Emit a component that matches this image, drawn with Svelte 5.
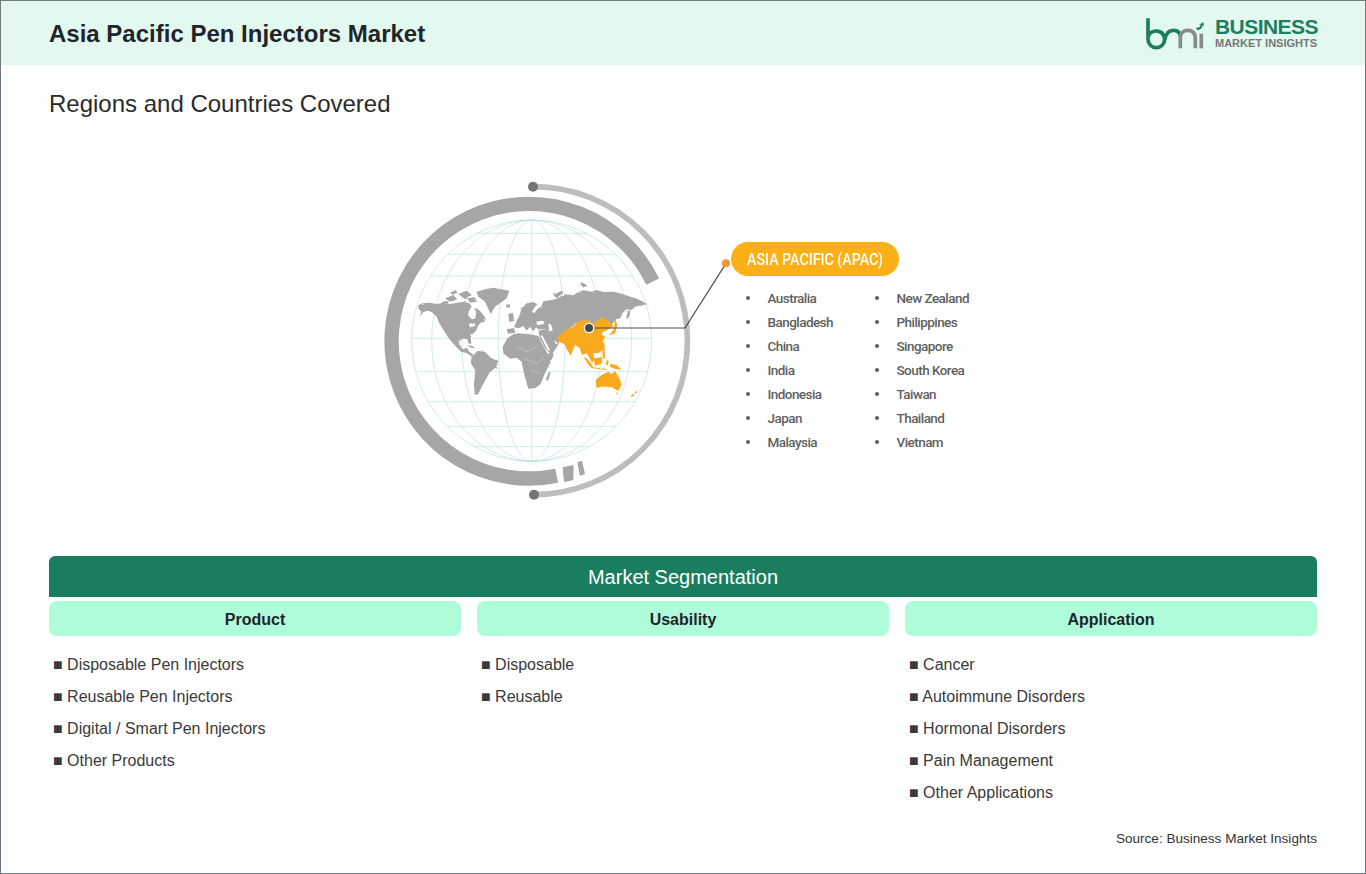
<script>
  const cx = 485, cy = 512, rx = 360, ry = 362;
  const lats = [190, 253, 318, 505, 605, 695, 770, 830].map((y) => {
    const half = rx * Math.sqrt(1 - ((y - cy) / ry) ** 2);
    return { y, x1: cx - half, x2: cx + half };
  });
  const meridians = [360, 300, 210, 100];

  const grayLand = [
    "145,405 158,400 180,398 200,402 222,398 240,402 262,398 280,395 298,400 305,410 300,418 295,425 296,438 305,448 315,446 318,432 316,415 325,418 338,432 348,447 342,456 332,458 325,466 318,482 308,492 302,502 304,520 297,523 291,507 276,506 266,512 269,526 278,538 291,533 298,546 312,556 306,560 290,549 274,546 254,526 236,505 222,482 208,460 200,440 188,428 175,422 160,426 150,440 154,425 145,415",
    "320,365 345,358 370,353 418,362 410,385 392,398 375,410 362,432 352,410 345,395 325,380",
    "305,562 322,543 345,545 362,563 385,572 378,592 358,608 348,628 335,650 325,672 314,675 312,640 316,602 302,578",
    "398,530 412,505 430,493 445,490 475,492 505,498 518,525 532,550 552,553 535,590 524,612 512,642 497,654 475,656 463,615 455,575 440,563 420,566 400,550",
    "537,605 542,607 534,632 527,630",
    "410,478 432,474 436,488 414,491",
    "415,432 428,428 434,452 418,456",
    "408,405 420,403 420,412 410,413",
    "432,472 440,452 448,438 452,425 455,415 470,400 490,396 502,403 494,412 486,425 492,430 502,418 515,408 520,394 545,390 560,386 585,373 610,376 625,366 640,361 665,365 680,360 700,366 730,365 750,370 775,378 800,386 815,393 832,403 815,406 795,410 785,420 770,418 758,428 750,445 738,448 725,465 695,445 675,460 630,455 590,480 562,505 552,498 540,485 525,478 505,478 498,472 490,484 480,470 470,482 460,468 448,474",
    "505,482 525,478 545,486 562,505 568,520 545,555 525,535 510,505",
    "772,428 782,418 778,440 768,448",
    "630,342 640,338 652,348 640,352",
    "550,375 575,362 580,368 560,385",
    "290,525 305,527 316,535 303,533",
    "225,385 250,375 262,388 240,395",
    "265,372 290,362 305,375 285,388",
    "292,385 315,382 318,395 300,398",
    "240,368 258,360 262,368 248,374",
    "215,396 232,392 236,400 220,402",
  ];
  const whiteHoles = [
    "498,455 520,452 522,462 502,466",
    "535,462 543,462 548,482 538,484",
    "512,498 517,496 540,540 534,542",
    "552,510 562,518 566,524 556,520",
    "296,462 312,458 316,468 300,472",
  ];
  const orangeLand = [
    "560,505 575,490 590,478 610,470 630,452 650,450 675,460 685,450 700,443 720,455 730,470 715,478 705,485 695,488 700,500 708,495 698,515 702,535 685,550 670,550 673,570 665,580 658,562 650,550 635,555 630,535 615,525 605,550 602,558 592,540 583,522 565,515",
    "735,445 742,465 735,490 715,497 722,490 732,478",
    "640,560 650,565 670,590 660,590",
    "670,565 698,562 695,582 675,587",
    "660,590 710,597 710,600 664,594",
    "696,518 703,518 705,565 698,562",
    "710,570 716,572 714,586 708,584",
    "720,582 740,585 755,600 735,597 720,590",
    "677,630 695,615 715,605 725,612 735,603 748,625 755,645 745,662 720,650 695,650 680,655",
    "738,668 744,668 742,676",
    "782,678 790,672 802,660 800,668 786,682",
  ];

  const left = ["Australia", "Bangladesh", "China", "India", "Indonesia", "Japan", "Malaysia"];
  const right = ["New Zealand", "Philippines", "Singapore", "South Korea", "Taiwan", "Thailand", "Vietnam"];

  const columns = [
    { title: "Product", items: ["Disposable Pen Injectors", "Reusable Pen Injectors", "Digital / Smart Pen Injectors", "Other Products"] },
    { title: "Usability", items: ["Disposable", "Reusable"] },
    { title: "Application", items: ["Cancer", "Autoimmune Disorders", "Hormonal Disorders", "Pain Management", "Other Applications"] },
  ];
</script>

<div class="page">
  <header class="top">
    <h1>Asia Pacific Pen Injectors Market</h1>
    <div class="logo">
      <svg class="mark" viewBox="40 45 190 105" aria-hidden="true">
        <g fill="none" stroke-width="11">
          <path d="M55 52 V115 A25 25 0 1 0 80 90 C70 90 60 96 56 106" stroke="#1a7f5f" />
          <path d="M80 90 C98 90 104 102 106 116 C108 98 118 88 132 88 C144 88 150 94 152 104" stroke="#1a7f5f" />
          <path d="M152 104 V142" stroke="#8a8a8a" />
          <path d="M152 110 C152 96 162 88 174 88 C188 88 196 96 197 110 V142" stroke="#8a8a8a" />
          <path d="M215 98 V142" stroke="#8a8a8a" />
        </g>
        <path d="M200 80 C209 80 213 76 213 71 L208 72 L221 63 L223 77 L219 73 C218 82 211 88 202 87 Z" fill="#1a7f5f" />
      </svg>
      <div class="wordmark">
        <span class="w1">BUSINESS</span>
        <span class="w2">MARKET INSIGHTS</span>
      </div>
    </div>
  </header>

  <h2>Regions and Countries Covered</h2>

  <section class="map">
    <svg class="globe" viewBox="0 0 1095 1020" aria-hidden="true">
      <defs>
        <filter id="rough" x="0" y="0" width="1095" height="1020" filterUnits="userSpaceOnUse">
          <feTurbulence type="fractalNoise" baseFrequency="0.09" numOctaves="2" seed="3" result="n" />
          <feDisplacementMap in="SourceGraphic" in2="n" scale="6" />
        </filter>
      </defs>
      <g fill="none" stroke="#a9dcd6" stroke-width="1.6">
        {#each lats as l}
          <line x1={l.x1} y1={l.y} x2={l.x2} y2={l.y} />
        {/each}
        <line x1={cx} y1={cy - ry} x2={cx} y2={cy + ry} />
        {#each meridians as m}
          <ellipse {cx} {cy} rx={m} {ry} />
        {/each}
      </g>
      <g filter="url(#rough)">
        <g fill="#a6a6a6">
          {#each grayLand as p}
            <polygon points={p} />
          {/each}
        </g>
        <g fill="#fff">
          {#each whiteHoles as p}
            <polygon points={p} />
          {/each}
        </g>
        <g fill="#f9aa1f">
          {#each orangeLand as p}
            <polygon points={p} />
          {/each}
        </g>
      </g>
      <path d="M440 530 L470 545 L500 530 M460 565 L500 580 L520 565 M480 600 L510 610" fill="none" stroke="#d9d9d9" stroke-width="1.5" />

      <path d="M848 335 A412 412 0 1 0 560 917" fill="none" stroke="#a6a6a6" stroke-width="43" />
      <polygon points="578,892 611,885 610,930 582,937" fill="#a6a6a6" />
      <polygon points="622,877 636,872 645,912 630,918" fill="#a6a6a6" />

      <path d="M489 50 A462 462 0 0 1 492 974" fill="none" stroke="#bdbdbd" stroke-width="17" />
      <circle cx="489" cy="50" r="15" fill="#757575" />
      <circle cx="492" cy="974" r="15" fill="#757575" />

      <path d="M657 474 H945 L1068 280" fill="none" stroke="#4a4a4a" stroke-width="3.5" />
      <circle cx="657" cy="474" r="14" fill="#3f4a4f" stroke="#fff" stroke-width="4" />
      <circle cx="1068" cy="280" r="12" fill="#f39a2d" />
    </svg>

    <div class="legend">
      <div class="pill"><span>ASIA PACIFIC (APAC)</span></div>
      <div class="countries">
        <ul>
          {#each left as c}<li>{c}</li>{/each}
        </ul>
        <ul>
          {#each right as c}<li>{c}</li>{/each}
        </ul>
      </div>
    </div>
  </section>

  <section class="seg">
    <div class="band">Market Segmentation</div>
    <div class="cols">
      {#each columns as col}
        <div class="col">
          <h3>{col.title}</h3>
          <ul>
            {#each col.items as item}
              <li>■ {item}</li>
            {/each}
          </ul>
        </div>
      {/each}
    </div>
  </section>

  <footer>Source: Business Market Insights</footer>
</div>

<style>
  :global(body) {
    margin: 0;
    background: #fff;
  }
  .page {
    box-sizing: border-box;
    width: 1366px;
    height: 874px;
    border: 1px solid #6f7b80;
    font-family: "Liberation Sans", Arial, sans-serif;
    color: #222;
    display: flex;
    flex-direction: column;
    overflow: hidden;
  }
  .top {
    height: 64px;
    flex: none;
    background: #e3f8ef;
    display: flex;
    align-items: center;
    justify-content: space-between;
    padding: 0 48px;
  }
  h1 {
    margin: 2px 0 0;
    font-size: 24px;
    font-weight: 700;
    color: #212529;
  }
  .logo {
    display: flex;
    align-items: center;
    gap: 9px;
    margin-top: 0;
  }
  .mark {
    width: 63.3px;
    height: 35px;
    display: block;
    margin-left: -2px;
  }
  .wordmark {
    display: flex;
    flex-direction: column;
    line-height: 1;
    font-weight: 700;
    width: 102px;
  }
  .w1 {
    font-size: 21px;
    color: #1a7f5f;
    letter-spacing: -0.55px;
    line-height: 19px;
    white-space: nowrap;
  }
  .w2 {
    font-size: 11px;
    color: #777;
    line-height: 12px;
    white-space: nowrap;
    margin-top: 1px;
  }
  h2 {
    margin: 24px 0 0 48px;
    font-size: 24px;
    line-height: 30px;
    font-weight: 400;
    color: #2b2b2b;
    flex: none;
  }
  .map {
    flex: none;
    height: 442px;
    display: flex;
    align-items: flex-start;
    padding-left: 369px;
    margin-top: -5px;
  }
  .globe {
    width: 365px;
    height: 340px;
    flex: none;
    margin-top: 56px;
  }
  .legend {
    margin-top: 128px;
    margin-left: -4px;
    width: 300px;
  }
  .pill {
    width: 168px;
    height: 34px;
    border-radius: 17px;
    background: #fbb017;
    color: #fff;
    display: flex;
    align-items: center;
    padding-left: 16px;
    box-sizing: border-box;
    font-family: Roboto, sans-serif;
    font-weight: 500;
    font-size: 17px;
    white-space: nowrap;
  }
  .pill span {
    display: inline-block;
    transform: scaleX(0.835);
    transform-origin: left center;
  }
  .countries {
    display: flex;
    margin-top: 10px;
    margin-left: 14px;
  }
  .countries ul {
    list-style: none;
    margin: 0;
    padding: 0;
    width: 129px;
  }
  .countries li {
    height: 24px;
    line-height: 24px;
    font-family: Roboto, sans-serif;
    font-size: 13.5px;
    font-weight: 500;
    color: #5f5f5f;
    padding-left: 22.5px;
    position: relative;
    white-space: nowrap;
    letter-spacing: -0.55px;
  }
  .countries li::before {
    content: "";
    position: absolute;
    left: 1px;
    top: 10px;
    width: 4px;
    height: 4px;
    border-radius: 50%;
    background: #5f5f5f;
  }
  .seg {
    margin: 0 48px;
    flex: none;
  }
  .band {
    height: 41px;
    background: #1a7d5f;
    border-radius: 6px 6px 0 0;
    color: #fff;
    font-size: 20px;
    line-height: 43px;
    text-align: center;
  }
  .cols {
    display: grid;
    grid-template-columns: repeat(3, 412px);
    column-gap: 16px;
    margin-top: 4px;
  }
  h3 {
    margin: 0;
    height: 35px;
    line-height: 37px;
    border-radius: 8px;
    background: #aefcd9;
    text-align: center;
    font-size: 16px;
    font-weight: 700;
    color: #212529;
  }
  .col ul {
    list-style: none;
    margin: 13px 0 0;
    padding: 0 0 0 4px;
  }
  .col li {
    height: 32px;
    line-height: 32px;
    font-size: 16px;
    color: #3a3a3a;
    white-space: nowrap;
  }
  footer {
    position: absolute;
    top: 831px;
    right: 49px;
    font-size: 13.55px;
    line-height: 16px;
    color: #333;
  }
</style>
